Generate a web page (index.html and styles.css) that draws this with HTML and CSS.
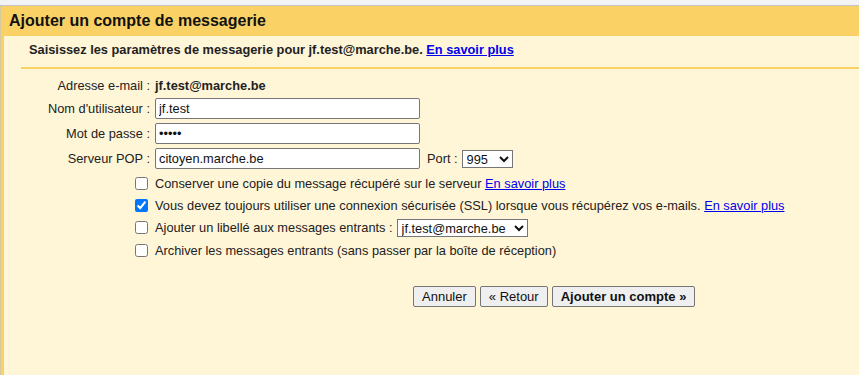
FILE: index.html
```html
<!DOCTYPE html>
<html lang="fr">
<head>
  <meta charset="UTF-8">
  <title>Ajouter un compte de messagerie</title>
  <link rel="stylesheet" href="styles.css">
</head>
<body>
  <div class="topbar"></div>
  <div class="frame">
    <div class="panel">
      <h1 class="panel-title">Ajouter un compte de messagerie</h1>
      <div class="panel-body">
        <div class="intro">
          Saisissez les paramètres de messagerie pour jf.test@marche.be. <a href="#">En savoir plus</a>
        </div>
        <form class="settings" onsubmit="return false">
          <div class="fields">
            <label class="lbl">Adresse e-mail :</label>
            <div class="val val-email">jf.test@marche.be</div>

            <label class="lbl" for="user">Nom d'utilisateur :</label>
            <div class="val"><input id="user" class="txt" type="text" value="jf.test"></div>

            <label class="lbl" for="pass">Mot de passe :</label>
            <div class="val"><input id="pass" class="txt" type="password" value="12345"></div>

            <label class="lbl" for="pop">Serveur POP :</label>
            <div class="val">
              <input id="pop" class="txt" type="text" value="citoyen.marche.be">
              <label class="port-lbl" for="port">Port :</label>
              <select id="port" class="sel sel-port">
                <option>995</option>
                <option>110</option>
              </select>
            </div>
          </div>

          <div class="options">
            <div class="opt">
              <span class="box"><input type="checkbox" id="o1"></span>
              <label for="o1">Conserver une copie du message récupéré sur le serveur</label>&nbsp;<a href="#">En savoir plus</a>
            </div>
            <div class="opt">
              <span class="box"><input type="checkbox" id="o2" checked></span>
              <label for="o2">Vous devez toujours utiliser une connexion sécurisée (SSL) lorsque vous récupérez vos e-mails.</label>&nbsp;<a href="#">En savoir plus</a>
            </div>
            <div class="opt opt-tall">
              <span class="box"><input type="checkbox" id="o3"></span>
              <label for="o3">Ajouter un libellé aux messages entrants :</label>
              <select class="sel sel-label">
                <option>jf.test@marche.be</option>
              </select>
            </div>
            <div class="opt">
              <span class="box"><input type="checkbox" id="o4"></span>
              <label for="o4">Archiver les messages entrants (sans passer par la boîte de réception)</label>
            </div>
          </div>

          <div class="actions">
            <button class="btn" type="button">Annuler</button>
            <button class="btn" type="button">« Retour</button>
            <button class="btn btn-main" type="submit">Ajouter un compte »</button>
          </div>
        </form>
      </div>
    </div>
  </div>
</body>
</html>
```

FILE: styles.css
```css
:root { --yellow: #fad165; --cream: #fff5d7; --text: #222; --fs: 12.8px; }
html, body { margin:0; height:100%; }
body { font-family:'Liberation Sans', Arial, sans-serif; font-size:var(--fs); color:var(--text); background:var(--cream); }
a { color:#0000ee; }

.topbar { height:5px; background:#f1f3f4; border-bottom:1px solid #c4c4c4; }
.frame { border-left:1px solid #d6c9a0; min-height:calc(100% - 6px); box-sizing:border-box; }
.panel { border-left:3px solid var(--yellow); background:var(--cream); min-height:370px; }
.panel-title { margin:0; height:30px; line-height:30px; padding-left:5px; background:var(--yellow); font-size:16px; font-weight:bold; color:#111; }

.panel-body { padding-top:5px; }
.intro { margin-left:17px; padding:0 0 8px 8px; border-bottom:2px solid var(--yellow); font-weight:bold; line-height:18px; }
.intro a { font-weight:bold; }

.settings { padding-top:8px; }
.fields { display:grid; grid-template-columns:146px auto; column-gap:5px; row-gap:4px; }
.lbl { text-align:right; align-self:center; }
.val { display:flex; align-items:center; }
.val-email { font-weight:bold; height:17px; }
.txt { width:265px; height:21px; box-sizing:border-box; border:1px solid #767676; border-radius:2px; padding:1px 3px; font:var(--fs) 'Liberation Sans', Arial, sans-serif; color:#111; background:#fff; }
.port-lbl { margin:0 4px 0 7px; }
.sel { font:var(--fs) 'Liberation Sans', Arial, sans-serif; color:#111; background:#fff; border:1px solid #767676; border-radius:0; height:18px; padding:0; }
.sel-port { width:51px; }
.sel-label { margin-left:4px; width:131px; }

.options { margin-top:3px; }
.opt { display:flex; align-items:center; height:22px; }
.opt-tall { height:23px; }
.box { width:151px; display:flex; justify-content:flex-end; }
.box input { margin:0 7px 0 0; width:13px; height:13px; }

.actions { display:flex; gap:4px; padding-left:409px; margin-top:25px; }
.btn { height:21px; padding:0 8px; font:13px 'Liberation Sans', Arial, sans-serif; color:#111; background:#efefef; border:1px solid #767676; border-radius:2px; }
.btn-main { font-weight:bold; }
```
